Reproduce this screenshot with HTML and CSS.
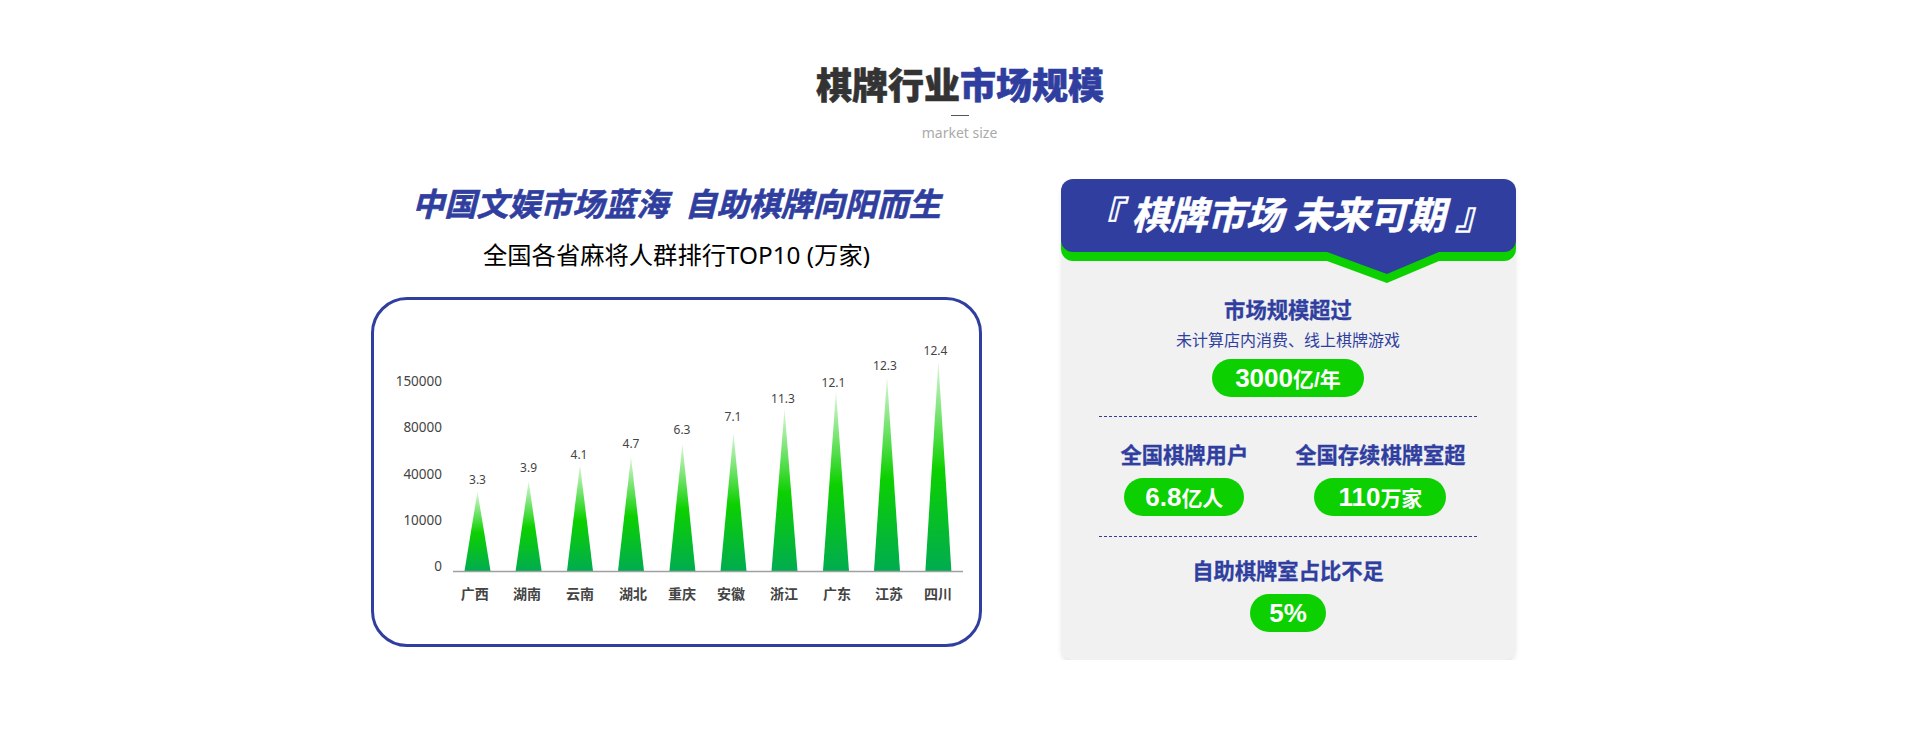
FILE: index.html
```html
<!DOCTYPE html>
<html lang="zh-Hans">

<head>
    <meta charset="UTF-8">
    <meta name="viewport" content="width=device-width, initial-scale=1.0">
    <title>棋牌行业市场规模</title>
    <link rel="stylesheet" href="styles.css">
</head>

<body>
    <header class="page-title">
        <h1>棋牌行业<span>市场规模</span></h1>
        <i class="title-line"></i>
        <p>market size</p>
    </header>

    <div class="content">
        <section class="left">
            <h2>中国文娱市场蓝海&nbsp;&nbsp;自助棋牌向阳而生</h2>
            <h3>全国各省麻将人群排行TOP10 (万家)</h3>
            <div class="chart-card">
                <svg class="chart" width="605" height="343" viewBox="0 0 605 343">
                    <defs>
                        <linearGradient id="barFill" x1="0" y1="0" x2="0" y2="1">
                            <stop offset="0" stop-color="#dcf7da"></stop>
                            <stop offset="0.52" stop-color="#0cd000"></stop>
                            <stop offset="1" stop-color="#00ac50"></stop>
                        </linearGradient>
                    </defs>

                    <!-- 柱子 -->
                    <g fill="url(#barFill)">
                        <polygon points="90.5,270 103.5,190.7 116.5,270"></polygon>
                        <polygon points="141.6,270 154.6,180 167.6,270"></polygon>
                        <polygon points="193,270 206,164 219,270"></polygon>
                        <polygon points="244,270 257,155.7 270,270"></polygon>
                        <polygon points="295.4,270 308.4,143 321.4,270"></polygon>
                        <polygon points="346.5,270 359.5,131.7 372.5,270"></polygon>
                        <polygon points="397.5,270 410.5,108 423.5,270"></polygon>
                        <polygon points="449,270 462,90.7 475,270"></polygon>
                        <polygon points="500,270 513,75.7 526,270"></polygon>
                        <polygon points="551.4,270 564.4,60.7 577.4,270"></polygon>
                    </g>
                    <line class="axis" x1="79" y1="270.5" x2="589" y2="270.5"></line>

                    <!-- y轴 -->
                    <g class="y-label">
                        <text x="68" y="85">150000</text>
                        <text x="68" y="131">80000</text>
                        <text x="68" y="178">40000</text>
                        <text x="68" y="224">10000</text>
                        <text x="68" y="270">0</text>
                    </g>

                    <!-- 数值 -->
                    <g class="value">
                        <text x="103.5" y="183">3.3</text>
                        <text x="154.6" y="171">3.9</text>
                        <text x="205" y="158">4.1</text>
                        <text x="257" y="147">4.7</text>
                        <text x="308" y="133">6.3</text>
                        <text x="359" y="120">7.1</text>
                        <text x="409" y="102">11.3</text>
                        <text x="459.5" y="86">12.1</text>
                        <text x="511" y="69">12.3</text>
                        <text x="561.5" y="54">12.4</text>
                    </g>

                    <!-- x轴 -->
                    <g class="x-label">
                        <text x="100.7" y="298">广西</text>
                        <text x="153" y="298">湖南</text>
                        <text x="206" y="298">云南</text>
                        <text x="259" y="298">湖北</text>
                        <text x="308" y="298">重庆</text>
                        <text x="357" y="298">安徽</text>
                        <text x="410" y="298">浙江</text>
                        <text x="463" y="298">广东</text>
                        <text x="515" y="298">江苏</text>
                        <text x="564" y="298">四川</text>
                    </g>
                </svg>
            </div>
        </section>

        <section class="panel">
            <div class="banner">『 棋牌市场 未来可期 』</div>
            <div class="panel-body">
                <div class="stat">
                    <h4>市场规模超过</h4>
                    <p>未计算店内消费、线上棋牌游戏</p>
                    <span class="pill">3000<small>亿/年</small></span>
                </div>
                <div class="stat stat-row">
                    <div class="col">
                        <h4>全国棋牌用户</h4>
                        <span class="pill pill-users">6.8<small>亿人</small></span>
                    </div>
                    <div class="col">
                        <h4>全国存续棋牌室超</h4>
                        <span class="pill pill-rooms">110<small>万家</small></span>
                    </div>
                </div>
                <div class="stat">
                    <h4>自助棋牌室占比不足</h4>
                    <span class="pill pill-small">5%</span>
                </div>
            </div>
        </section>
    </div>
</body>

</html>
```

FILE: styles.css
```css
* {
    box-sizing: border-box;
}

body {
    margin: 0;
    background-color: #fff;
    color: #333;
    font-family: "Noto Sans", "Noto Sans CJK SC", sans-serif;
}

h1,
h2,
h3,
h4,
p {
    margin: 0;
}

.page-title {
    padding-top: 68px;
    text-align: center;
}

.page-title h1 {
    font-size: 36px;
    line-height: 36px;
    font-weight: 900;
    color: #333;
    -webkit-text-stroke: 0.6px #333;
}

.page-title h1 span {
    color: #303f9f;
    -webkit-text-stroke: 0.6px #303f9f;
}

.title-line {
    display: block;
    width: 18px;
    height: 1px;
    margin: 11px auto 0;
    background-color: #555;
}

.page-title p {
    margin-top: 7px;
    padding-right: 1px;
    font-size: 14px;
    line-height: 20px;
    color: #aaa;
}

.content {
    display: flex;
    justify-content: space-between;
    width: 1200px;
    margin: 36px auto 0;
    padding: 0 44px 0 11px;
}

.left {
    width: 611px;
    padding-top: 5px;
    text-align: center;
}

.left h2 {
    font-size: 32px;
    line-height: 40px;
    font-style: italic;
    font-weight: 700;
    color: #303f9f;
    -webkit-text-stroke: 0.6px #303f9f;
}

.left h3 {
    margin-top: 13px;
    font-size: 24.3px;
    line-height: 36px;
    font-weight: 400;
    color: #000;
}

.chart-card {
    height: 350px;
    margin-top: 24px;
    padding-top: 1px;
    border: 3px solid #303f9f;
    border-radius: 36px;
}

.chart {
    display: block;
}

.axis {
    stroke: #a0a0a0;
    stroke-width: 1.5;
}

.chart text {
    fill: #444;
}

.y-label {
    font-size: 13.5px;
    text-anchor: end;
}

.value {
    font-size: 12px;
    text-anchor: middle;
}

.x-label {
    font-size: 14px;
    font-weight: 700;
    text-anchor: middle;
}

.panel {
    width: 455px;
    height: 481px;
    border-radius: 12px;
    background-color: #f1f1f1;
    box-shadow: 0 4px 6px -2px rgba(0, 0, 0, 0.16);
}

.banner {
    position: relative;
    height: 73px;
    border-radius: 12px;
    background-color: #303f9f;
    box-shadow: 0 9px 0 #0cd000;
    color: #fff;
    font-size: 38px;
    line-height: 70px;
    font-style: italic;
    font-weight: 700;
    text-align: center;
    white-space: pre;
    -webkit-text-stroke: 0.5px #fff;
}

/* 底部的箭头，绿色垫在蓝色下面 */
.banner:before,
.banner:after {
    content: '';
    position: absolute;
    left: 266px;
    width: 112px;
    height: 22px;
    clip-path: polygon(0 0, 100% 0, 53.5% 100%);
}

.banner:before {
    top: 82px;
    background-color: #0cd000;
}

.banner:after {
    top: 73px;
    background-color: #303f9f;
}

.panel-body {
    padding: 43px 39px 0 38px;
    text-align: center;
}

.stat {
    padding-bottom: 19px;
}

.stat+.stat {
    padding-top: 23px;
    border-top: 1px dashed #303f9f;
}

.stat:last-child {
    padding-top: 19px;
}

.stat-row {
    display: flex;
    justify-content: center;
    gap: 47px;
    padding-left: 10px;
    padding-bottom: 20px;
}

.col {
    display: flex;
    flex-direction: column;
    align-items: center;
}

.stat h4 {
    font-size: 21.3px;
    line-height: 30px;
    font-weight: 700;
    color: #303f9f;
    -webkit-text-stroke: 0.3px #303f9f;
}

.stat p {
    margin-top: 3px;
    font-size: 16px;
    line-height: 24px;
    color: #303f9f;
}

.pill {
    display: inline-block;
    height: 38px;
    margin-top: 7px;
    padding: 0 23px;
    border-radius: 19px;
    background-color: #0cd000;
    color: #fff;
    font-family: "Liberation Sans", "Noto Sans CJK SC", sans-serif;
    font-size: 26px;
    line-height: 38px;
    font-weight: 700;
}

.col .pill,
.stat:last-child .pill {
    margin-top: 8px;
}

.pill small {
    font-size: 21px;
}

.pill-users {
    padding: 0 21px;
}

.pill-rooms {
    padding: 0 24px;
}

.pill-small {
    padding: 0 19px;
}
```
